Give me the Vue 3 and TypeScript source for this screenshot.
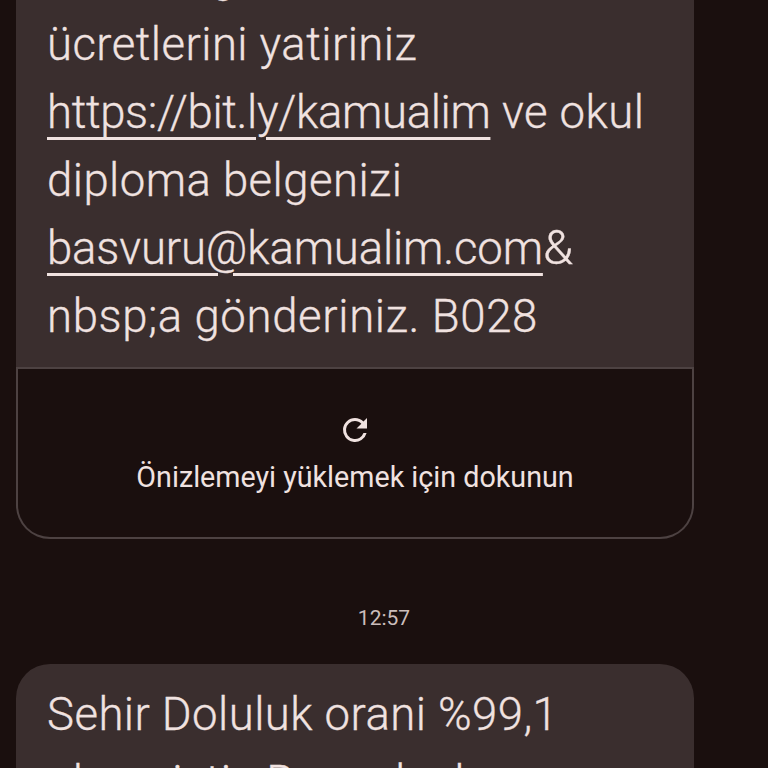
<script setup lang="ts">
const lines1 = ['ücretlerini yatiriniz'];
</script>

<template>
  <main class="screen">
    <section class="card">
      <div class="bubble first">
        <p class="line">Tüm belge</p>
        <p class="line" v-for="l in lines1" :key="l">{{ l }}</p>
        <p class="line"><span class="link url">https://bit.ly/kamualim</span> ve okul</p>
        <p class="line">diploma belgenizi</p>
        <p class="line"><span class="link mail">basvuru@kamualim.com</span><span class="amp">&amp;</span></p>
        <p class="line wide">nbsp;a gönderiniz. B028</p>
      </div>
      <div class="preview">
        <svg class="reload" viewBox="0 0 24 24" width="36" height="36" aria-hidden="true">
          <path d="M17.65 6.35A7.96 7.96 0 0 0 12 4a8 8 0 1 0 7.73 10h-2.08A6 6 0 1 1 12 6c1.66 0 3.14.69 4.22 1.78L13 11h7V4l-2.35 2.35z" fill="currentColor" />
        </svg>
        <span class="hint">Önizlemeyi yüklemek için dokunun</span>
      </div>
    </section>
    <div class="time">12:57</div>
    <div class="bubble second">
      <p class="line">Sehir Doluluk orani %99,1</p>
      <p class="line tight">olmusistir. Bu nedenle</p>
    </div>
  </main>
</template>

<style>
html, body { margin: 0; background: #1a0f0e; }
</style>

<style scoped>
.screen {
  width: 768px;
  height: 768px;
  overflow: hidden;
  box-sizing: border-box;
  padding-left: 16px;
  background: #1a0f0e;
  font-family: Roboto, "Liberation Sans", sans-serif;
  color: #f0e2e0;
}
.card { width: 678px; margin-top: -57px; }
.bubble { box-sizing: border-box; width: 678px; background: #3a2e2e; padding: 0 31px; }
.first { height: 426px; border-bottom: 2px solid #4d4242; }
.line { margin: 0; height: 68px; line-height: 68px; font-size: 45.5px; font-weight: 300; letter-spacing: 0.45px; white-space: nowrap; -webkit-text-stroke: 0.3px currentColor; }
.wide { letter-spacing: 0.65px; }
.tight { letter-spacing: 0.2px; }
.link { text-decoration: underline; text-decoration-thickness: 3px; text-underline-offset: 9px; }
.url { letter-spacing: -0.35px; }
.mail { letter-spacing: -0.15px; }
.amp { font-size: 49px; line-height: 1; }
.preview {
  box-sizing: border-box;
  height: 170px;
  border: 2px solid #4d4242;
  border-top: 0;
  border-radius: 0 0 34px 34px;
  display: flex;
  flex-direction: column;
  align-items: center;
  padding-top: 43px;
}
.reload { display: block; }
.hint { margin-top: 11px; font-size: 28.7px; line-height: 36px; }
.time { margin-top: 61px; width: 736px; text-align: center; font-size: 21px; line-height: 36px; color: #cbbdbb; }
.second { margin-top: 28px; border-radius: 34px 34px 0 0; padding-top: 17px; height: 200px; }
</style>
